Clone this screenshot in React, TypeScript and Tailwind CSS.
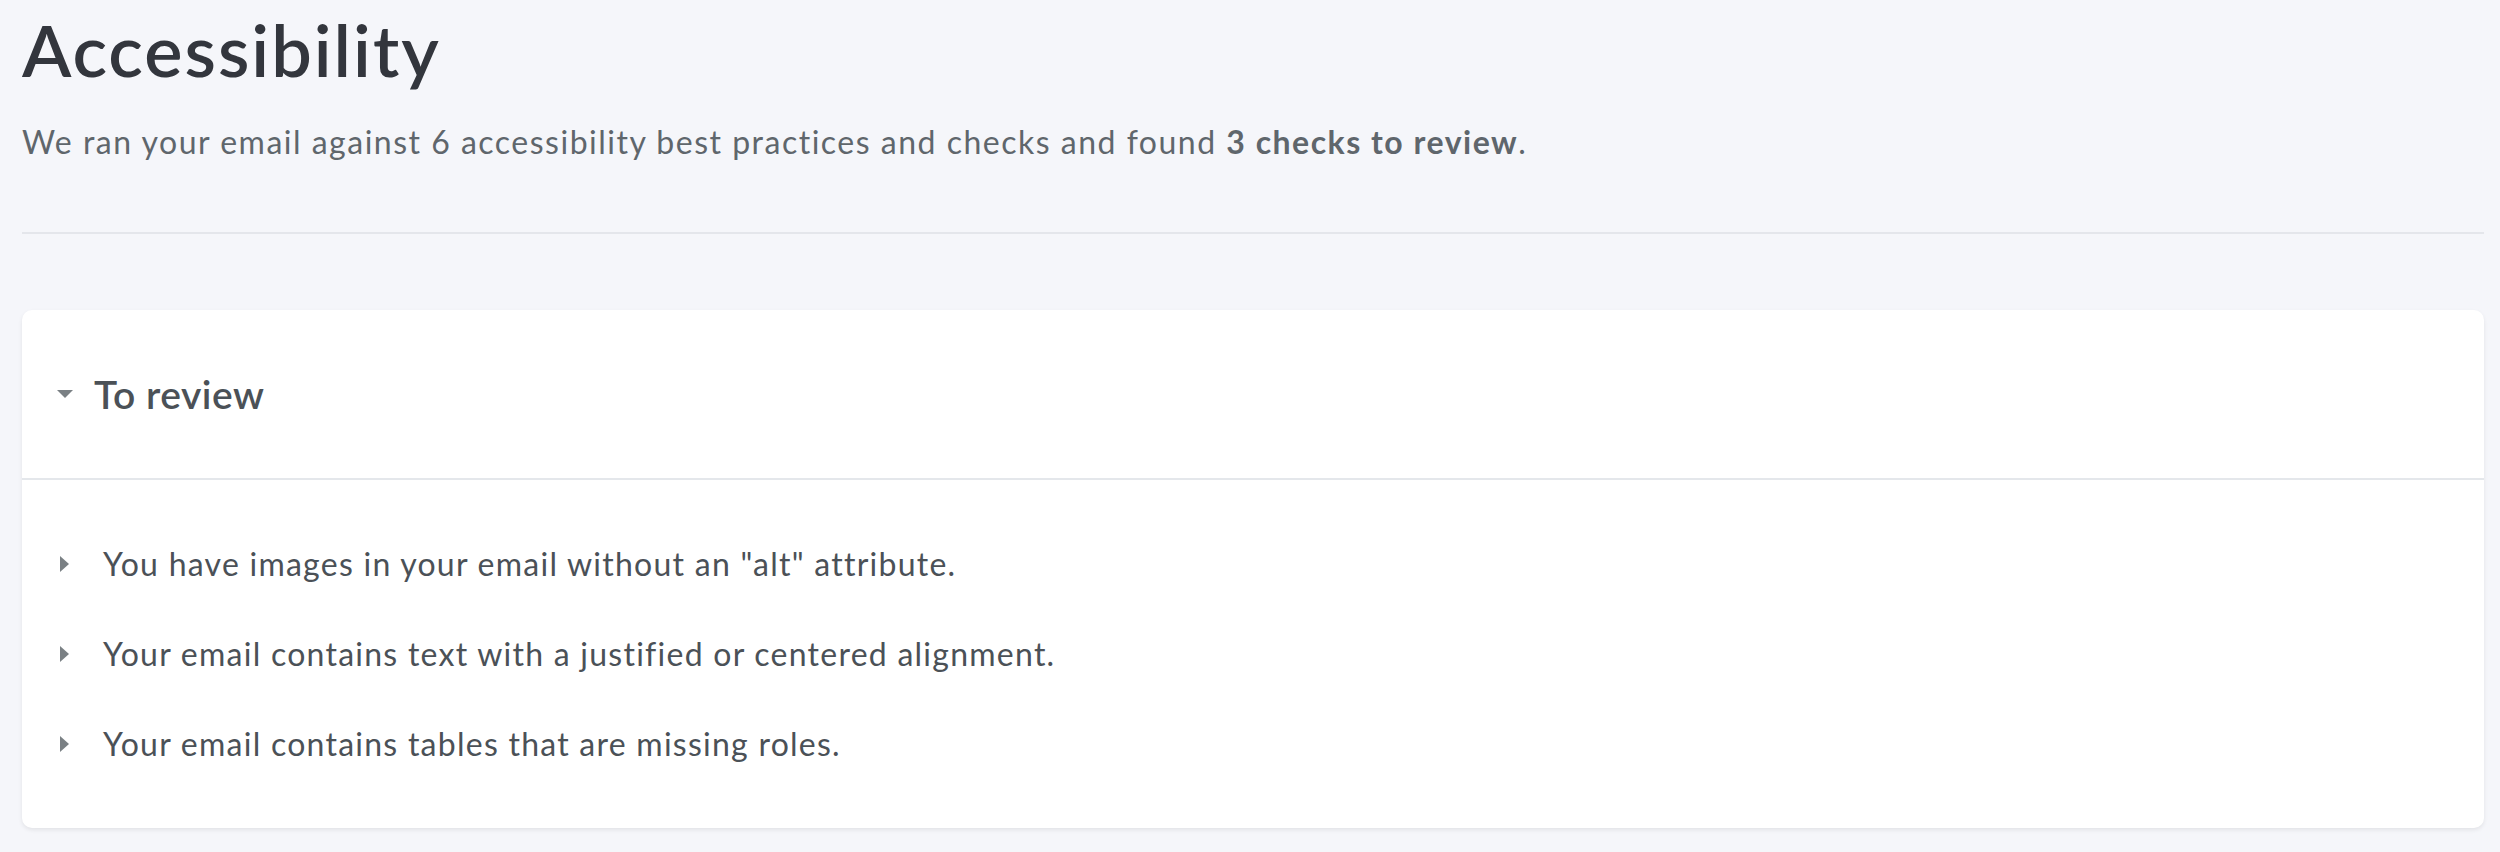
function CaretDown() {
  return (
    <svg width="16" height="8" viewBox="0 0 16 8" className="shrink-0">
      <path d="M0 0h16L8 8z" fill="#7a8084" />
    </svg>
  );
}

function CaretRight() {
  return (
    <svg width="9" height="16" viewBox="0 0 9 16" className="shrink-0">
      <path d="M0 0l9 8-9 8z" fill="#7a8084" />
    </svg>
  );
}

const checks = [
  'You have images in your email without an "alt" attribute.',
  'Your email contains text with a justified or centered alignment.',
  'Your email contains tables that are missing roles.',
];

export default function App() {
  return (
    <div className="min-h-screen bg-[#f5f6fa] pl-[22px] pr-[16px] font-['Lato',sans-serif]">
      <h1 className="pt-[9px] text-[72px] leading-[80px] font-semibold tracking-[2px] text-[#33363d]">
        Accessibility
      </h1>
      <p className="mt-[33px] text-[32px] leading-[40px] tracking-[1.5px] text-[#5f666c]">
        We ran your email against 6 accessibility best practices and checks and found{' '}
        <span className="font-bold">3 checks to review</span>.
      </p>
      <div className="mt-[70px] h-[2px] bg-[#e4e6eb]" />

      <div className="mt-[76px] rounded-[10px] bg-white shadow-[0_2px_4px_rgba(0,0,0,0.08)]">
        <div className="flex h-[170px] items-center gap-[21px] border-b-2 border-[#e4e7eb] pl-[35px]">
          <CaretDown />
          <h2 className="text-[39px] font-semibold tracking-[0.5px] text-[#4b5157]">To review</h2>
        </div>
        <ul className="py-[39px]">
          {checks.map((c) => (
            <li key={c} className="flex h-[90px] items-center gap-[34px] pl-[38px]">
              <CaretRight />
              <span className="text-[32px] tracking-[1.25px] text-[#4b5157]">{c}</span>
            </li>
          ))}
        </ul>
      </div>
    </div>
  );
}
